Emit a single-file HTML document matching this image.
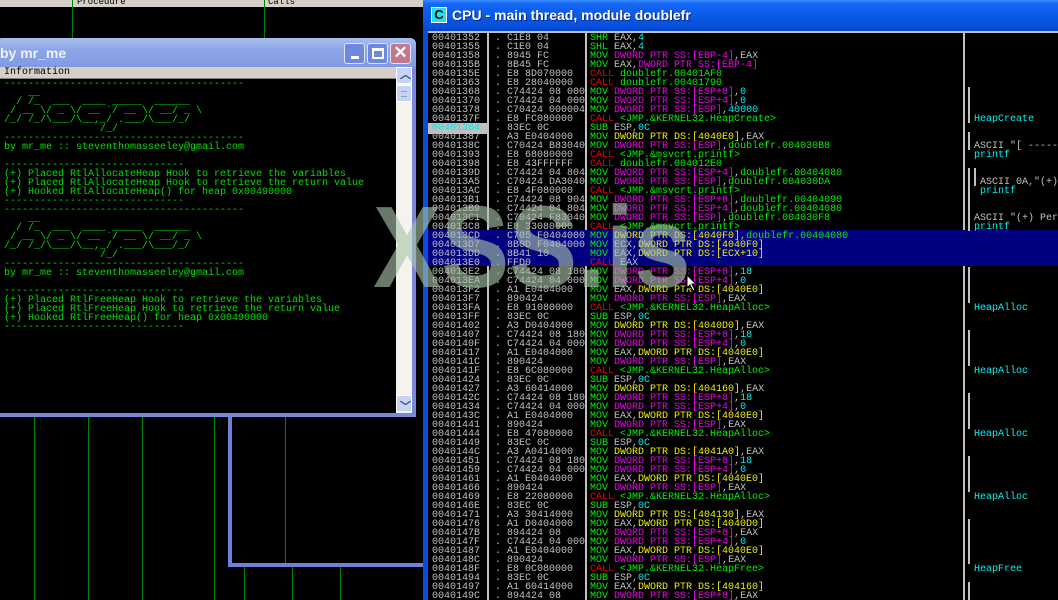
<!DOCTYPE html>
<html><head><meta charset="utf-8"><style>
*{margin:0;padding:0;box-sizing:border-box}
body{width:1058px;height:600px;background:#000;position:relative;overflow:hidden;font-family:"Liberation Mono",monospace;font-size:10px;line-height:9px;color:#c0c0c0}
.abs{position:absolute}
.gl{position:absolute;width:1px;background:#008000}
.lv{position:absolute;background:#7080d8}
#cpu{position:absolute;left:423px;top:0;width:635px;height:600px;background:#0a4ee0}
#ctitle{position:absolute;left:0;top:0;width:635px;height:31px;background:linear-gradient(#3a8cff 0,#1466f4 4px,#0a5ae8 50%,#0750dc 85%,#0646c8 100%)}
#ctitle .ic{position:absolute;left:8px;top:7px;width:16px;height:16px;background:#1ee0f0;border:1px solid #fff;color:#000;font:bold 13px "Liberation Sans",sans-serif;text-align:center;line-height:14px}
#ctitle .t{position:absolute;left:29px;top:7px;color:#fff;font:bold 14px "Liberation Sans",sans-serif;text-shadow:1px 1px 0 #0a2a80;white-space:nowrap}
#list{position:absolute;left:5px;top:31px;width:630px;height:569px;background:#000;border-top:2px solid #c0c0c0;overflow:hidden}
.row{height:9px;white-space:nowrap;position:relative;line-height:11px}
.row span{display:inline-block;vertical-align:top}
.row span span{display:inline}
.a{width:66px;padding-left:4px}
.h{width:91px;padding-left:1px;overflow:hidden;height:11px}
.n{padding-left:5px}
.g{color:#00f000}.m{color:#f000f0}.y{color:#f0f000}.c{color:#00f0f0}.r{color:#f00000}
.sep{position:absolute;top:0;width:2px;height:569px;background:#c0c0c0}
.br{position:absolute;width:2px;background:#c0c0c0}
.cm{position:absolute;white-space:nowrap;line-height:11px}
#lw{position:absolute;left:-4px;top:38px;width:420px;height:379px;background:#7a88dc;border-radius:6px 6px 0 0}
#lt{position:absolute;left:0;top:0;width:420px;height:29px;background:linear-gradient(#a9bdf0,#8ea6e8 40%,#8099e2);border-radius:6px 6px 0 0}
#lt .t{position:absolute;left:4px;top:7px;color:#eef2ff;font:bold 14px "Liberation Sans",sans-serif}
.btn{position:absolute;top:5px;width:21px;height:21px;border:1px solid #dde4fb;border-radius:3px;background:#6f88df}
#lc{position:absolute;left:4px;top:29px;width:412px;height:346px;background:#000}
#hd{position:absolute;left:0;top:0;width:396px;height:12px;background:#d4d0c8;color:#000;padding-left:4px;line-height:12px;border-bottom:1px solid #808080}
#sb{position:absolute;left:396px;top:0;width:16px;height:346px;background:#f4f3ee}
.sbb{position:absolute;left:0;width:16px;height:17px;background:#c6d3f7;border:1px solid #fff;border-radius:2px}
#log{position:absolute;left:4px;top:13px;color:#00e000;white-space:pre;font-size:10px;line-height:9px}
</style></head><body>

<div class="abs" style="left:0;top:0;width:423px;height:7px;background:#d4d0c8;overflow:hidden;color:#000;font-size:9px;line-height:6px">
<span class="abs" style="left:77px;top:-1px">Procedure</span><span class="abs" style="left:268px;top:-1px">Calls</span></div>
<div class="gl" style="left:72px;top:0;height:38px"></div>
<div class="gl" style="left:264px;top:0;height:38px"></div>

<div class="gl" style="left:34px;top:416px;height:184px"></div>
<div class="gl" style="left:88px;top:416px;height:184px"></div>
<div class="gl" style="left:142px;top:416px;height:184px"></div>
<div class="gl" style="left:214px;top:416px;height:184px"></div>
<div class="gl" style="left:285px;top:416px;height:148px"></div>
<div class="gl" style="left:244px;top:566px;height:34px"></div>
<div class="gl" style="left:292px;top:566px;height:34px"></div>
<div class="gl" style="left:340px;top:566px;height:34px"></div>
<div class="lv" style="left:228px;top:414px;width:4px;height:152px"></div>
<div class="lv" style="left:228px;top:563px;width:195px;height:4px"></div>

<div id="lw">
 <div id="lt"><span class="t">by mr_me</span>
  <div class="btn" style="left:348px"><div class="abs" style="left:6px;top:12px;width:8px;height:3px;background:#fff"></div></div>
  <div class="btn" style="left:371px"><div class="abs" style="left:4px;top:4px;width:12px;height:11px;border:2px solid #fff;border-top-width:3px"></div></div>
  <div class="btn" style="left:394px;background:#c07a8c"><div class="abs" style="left:0;top:-1px;width:19px;text-align:center;color:#fff;font:bold 17px 'Liberation Sans',sans-serif">✕</div></div>
 </div>
 <div id="lc">
  <div id="hd">Information</div>
  <div id="log">----------------------------------------
    __
  / /_  ___  ____ _____  ______
 / __ \/ _ \/ __ `/ __ \/ __/ _ \
/_/ /_/\___/\__,_/ .___/\___/_/
                /_/
----------------------------------------
by mr_me :: steventhomasseeley@gmail.com

------------------------------
(+) Placed RtlAllocateHeap Hook to retrieve the variables
(+) Placed RtlAllocateHeap Hook to retrieve the return value
(+) Hooked RtlAllocateHeap() for heap 0x00490000
------------------------------
----------------------------------------
    __
  / /_  ___  ____ _____  ______
 / __ \/ _ \/ __ `/ __ \/ __/ _ \
/_/ /_/\___/\__,_/ .___/\___/_/
                /_/
----------------------------------------
by mr_me :: steventhomasseeley@gmail.com

------------------------------
(+) Placed RtlFreeHeap Hook to retrieve the variables
(+) Placed RtlFreeHeap Hook to retrieve the return value
(+) Hooked RtlFreeHeap() for heap 0x00490000
------------------------------</div>
  <div id="sb">
   <div class="sbb" style="top:0"><div class="abs" style="left:3px;top:-2px;color:#36507a;font:bold 11px 'Liberation Sans',sans-serif">︿</div></div>
   <div class="sbb" style="top:18px"><div class="abs" style="left:4px;top:5px;width:6px;height:6px;border-top:1px solid #8aa;border-bottom:1px solid #8aa"></div></div>
   <div class="sbb" style="top:328px"><div class="abs" style="left:3px;top:2px;color:#36507a;font:bold 11px 'Liberation Sans',sans-serif">﹀</div></div>
  </div>
 </div>
</div>

<div id="cpu">
 <div id="ctitle"><div class="ic">C</div><div class="t">CPU - main thread, module doublefr</div></div>
 <div id="list">
  <div class="sep" style="left:59px"></div>
  <div class="sep" style="left:157px"></div>
  <div class="sep" style="left:535px"></div>
  <div class="abs" style="left:0;top:197px;width:630px;height:36px;background:#000080"></div>
  <div class="abs" style="left:0;top:0">
<div class="row"><span class="a">00401352</span><span class="h">. C1E8 04</span><span class="n"><span class="g">SHR</span> EAX,<span class="c">4</span></span></div>
<div class="row"><span class="a">00401355</span><span class="h">. C1E0 04</span><span class="n"><span class="g">SHL</span> EAX,<span class="c">4</span></span></div>
<div class="row"><span class="a">00401358</span><span class="h">. 8945 FC</span><span class="n"><span class="g">MOV</span> <span class="m">DWORD PTR SS:[EBP-4]</span>,EAX</span></div>
<div class="row"><span class="a">0040135B</span><span class="h">. 8B45 FC</span><span class="n"><span class="g">MOV</span> EAX,<span class="m">DWORD PTR SS:[EBP-4]</span></span></div>
<div class="row"><span class="a">0040135E</span><span class="h">. E8 8D070000</span><span class="n"><span class="r">CALL</span> <span class="g">doublefr.00401AF0</span></span></div>
<div class="row"><span class="a">00401363</span><span class="h">. E8 28040000</span><span class="n"><span class="r">CALL</span> <span class="g">doublefr.00401790</span></span></div>
<div class="row"><span class="a">00401368</span><span class="h">. C74424 08 0000</span><span class="n"><span class="g">MOV</span> <span class="m">DWORD PTR SS:[ESP+8]</span>,<span class="c">0</span></span></div>
<div class="row"><span class="a">00401370</span><span class="h">. C74424 04 0000</span><span class="n"><span class="g">MOV</span> <span class="m">DWORD PTR SS:[ESP+4]</span>,<span class="c">0</span></span></div>
<div class="row"><span class="a">00401378</span><span class="h">. C70424 0000040</span><span class="n"><span class="g">MOV</span> <span class="m">DWORD PTR SS:[ESP]</span>,<span class="c">40000</span></span></div>
<div class="row"><span class="a">0040137F</span><span class="h">. E8 FC080000</span><span class="n"><span class="r">CALL</span> <span class="g">&lt;JMP.&amp;KERNEL32.HeapCreate&gt;</span></span></div>
<div class="row"><span class="a" style="background:#c0c0c0;color:#00e8f0;width:59px">00401384</span><span class="h" style="margin-left:7px">. 83EC 0C</span><span class="n"><span class="g">SUB</span> ESP,<span class="c">0C</span></span></div>
<div class="row"><span class="a">00401387</span><span class="h">. A3 E0404000</span><span class="n"><span class="g">MOV</span> <span class="y">DWORD PTR DS:[4040E0]</span>,EAX</span></div>
<div class="row"><span class="a">0040138C</span><span class="h">. C70424 B830400</span><span class="n"><span class="g">MOV</span> <span class="m">DWORD PTR SS:[ESP]</span>,<span class="g">doublefr.004030B8</span></span></div>
<div class="row"><span class="a">00401393</span><span class="h">. E8 68080000</span><span class="n"><span class="r">CALL</span> <span class="g">&lt;JMP.&amp;msvcrt.printf&gt;</span></span></div>
<div class="row"><span class="a">00401398</span><span class="h">. E8 43FFFFFF</span><span class="n"><span class="r">CALL</span> <span class="g">doublefr.004012E0</span></span></div>
<div class="row"><span class="a">0040139D</span><span class="h">. C74424 04 8040</span><span class="n"><span class="g">MOV</span> <span class="m">DWORD PTR SS:[ESP+4]</span>,<span class="g">doublefr.00404080</span></span></div>
<div class="row"><span class="a">004013A5</span><span class="h">. C70424 DA30400</span><span class="n"><span class="g">MOV</span> <span class="m">DWORD PTR SS:[ESP]</span>,<span class="g">doublefr.004030DA</span></span></div>
<div class="row"><span class="a">004013AC</span><span class="h">. E8 4F080000</span><span class="n"><span class="r">CALL</span> <span class="g">&lt;JMP.&amp;msvcrt.printf&gt;</span></span></div>
<div class="row"><span class="a">004013B1</span><span class="h">. C74424 08 9040</span><span class="n"><span class="g">MOV</span> <span class="m">DWORD PTR SS:[ESP+8]</span>,<span class="g">doublefr.00404090</span></span></div>
<div class="row"><span class="a">004013B9</span><span class="h">. C74424 04 8040</span><span class="n"><span class="g">MOV</span> <span class="m">DWORD PTR SS:[ESP+4]</span>,<span class="g">doublefr.00404080</span></span></div>
<div class="row"><span class="a">004013C1</span><span class="h">. C70424 F830400</span><span class="n"><span class="g">MOV</span> <span class="m">DWORD PTR SS:[ESP]</span>,<span class="g">doublefr.004030F8</span></span></div>
<div class="row"><span class="a">004013C8</span><span class="h">. E8 33080000</span><span class="n"><span class="r">CALL</span> <span class="g">&lt;JMP.&amp;msvcrt.printf&gt;</span></span></div>
<div class="row"><span class="a">004013CD</span><span class="h">. C705 F0404000</span><span class="n"><span class="g">MOV</span> <span class="y">DWORD PTR DS:[4040F0]</span>,<span class="g">doublefr.00404080</span></span></div>
<div class="row"><span class="a">004013D7</span><span class="h">. 8B0D F0404000</span><span class="n"><span class="g">MOV</span> ECX,<span class="y">DWORD PTR DS:[4040F0]</span></span></div>
<div class="row"><span class="a">004013DD</span><span class="h">. 8B41 10</span><span class="n"><span class="g">MOV</span> EAX,<span class="y">DWORD PTR DS:[ECX+10]</span></span></div>
<div class="row"><span class="a">004013E0</span><span class="h">. FFD0</span><span class="n"><span class="r">CALL</span> EAX</span></div>
<div class="row"><span class="a">004013E2</span><span class="h">. C74424 08 1800</span><span class="n"><span class="g">MOV</span> <span class="m">DWORD PTR SS:[ESP+8]</span>,<span class="c">18</span></span></div>
<div class="row"><span class="a">004013EA</span><span class="h">. C74424 04 0000</span><span class="n"><span class="g">MOV</span> <span class="m">DWORD PTR SS:[ESP+4]</span>,<span class="c">0</span></span></div>
<div class="row"><span class="a">004013F2</span><span class="h">. A1 E0404000</span><span class="n"><span class="g">MOV</span> EAX,<span class="y">DWORD PTR DS:[4040E0]</span></span></div>
<div class="row"><span class="a">004013F7</span><span class="h">. 890424</span><span class="n"><span class="g">MOV</span> <span class="m">DWORD PTR SS:[ESP]</span>,EAX</span></div>
<div class="row"><span class="a">004013FA</span><span class="h">. E8 91080000</span><span class="n"><span class="r">CALL</span> <span class="g">&lt;JMP.&amp;KERNEL32.HeapAlloc&gt;</span></span></div>
<div class="row"><span class="a">004013FF</span><span class="h">. 83EC 0C</span><span class="n"><span class="g">SUB</span> ESP,<span class="c">0C</span></span></div>
<div class="row"><span class="a">00401402</span><span class="h">. A3 D0404000</span><span class="n"><span class="g">MOV</span> <span class="y">DWORD PTR DS:[4040D0]</span>,EAX</span></div>
<div class="row"><span class="a">00401407</span><span class="h">. C74424 08 1800</span><span class="n"><span class="g">MOV</span> <span class="m">DWORD PTR SS:[ESP+8]</span>,<span class="c">18</span></span></div>
<div class="row"><span class="a">0040140F</span><span class="h">. C74424 04 0000</span><span class="n"><span class="g">MOV</span> <span class="m">DWORD PTR SS:[ESP+4]</span>,<span class="c">0</span></span></div>
<div class="row"><span class="a">00401417</span><span class="h">. A1 E0404000</span><span class="n"><span class="g">MOV</span> EAX,<span class="y">DWORD PTR DS:[4040E0]</span></span></div>
<div class="row"><span class="a">0040141C</span><span class="h">. 890424</span><span class="n"><span class="g">MOV</span> <span class="m">DWORD PTR SS:[ESP]</span>,EAX</span></div>
<div class="row"><span class="a">0040141F</span><span class="h">. E8 6C080000</span><span class="n"><span class="r">CALL</span> <span class="g">&lt;JMP.&amp;KERNEL32.HeapAlloc&gt;</span></span></div>
<div class="row"><span class="a">00401424</span><span class="h">. 83EC 0C</span><span class="n"><span class="g">SUB</span> ESP,<span class="c">0C</span></span></div>
<div class="row"><span class="a">00401427</span><span class="h">. A3 60414000</span><span class="n"><span class="g">MOV</span> <span class="y">DWORD PTR DS:[404160]</span>,EAX</span></div>
<div class="row"><span class="a">0040142C</span><span class="h">. C74424 08 1800</span><span class="n"><span class="g">MOV</span> <span class="m">DWORD PTR SS:[ESP+8]</span>,<span class="c">18</span></span></div>
<div class="row"><span class="a">00401434</span><span class="h">. C74424 04 0000</span><span class="n"><span class="g">MOV</span> <span class="m">DWORD PTR SS:[ESP+4]</span>,<span class="c">0</span></span></div>
<div class="row"><span class="a">0040143C</span><span class="h">. A1 E0404000</span><span class="n"><span class="g">MOV</span> EAX,<span class="y">DWORD PTR DS:[4040E0]</span></span></div>
<div class="row"><span class="a">00401441</span><span class="h">. 890424</span><span class="n"><span class="g">MOV</span> <span class="m">DWORD PTR SS:[ESP]</span>,EAX</span></div>
<div class="row"><span class="a">00401444</span><span class="h">. E8 47080000</span><span class="n"><span class="r">CALL</span> <span class="g">&lt;JMP.&amp;KERNEL32.HeapAlloc&gt;</span></span></div>
<div class="row"><span class="a">00401449</span><span class="h">. 83EC 0C</span><span class="n"><span class="g">SUB</span> ESP,<span class="c">0C</span></span></div>
<div class="row"><span class="a">0040144C</span><span class="h">. A3 A0414000</span><span class="n"><span class="g">MOV</span> <span class="y">DWORD PTR DS:[4041A0]</span>,EAX</span></div>
<div class="row"><span class="a">00401451</span><span class="h">. C74424 08 1800</span><span class="n"><span class="g">MOV</span> <span class="m">DWORD PTR SS:[ESP+8]</span>,<span class="c">18</span></span></div>
<div class="row"><span class="a">00401459</span><span class="h">. C74424 04 0000</span><span class="n"><span class="g">MOV</span> <span class="m">DWORD PTR SS:[ESP+4]</span>,<span class="c">0</span></span></div>
<div class="row"><span class="a">00401461</span><span class="h">. A1 E0404000</span><span class="n"><span class="g">MOV</span> EAX,<span class="y">DWORD PTR DS:[4040E0]</span></span></div>
<div class="row"><span class="a">00401466</span><span class="h">. 890424</span><span class="n"><span class="g">MOV</span> <span class="m">DWORD PTR SS:[ESP]</span>,EAX</span></div>
<div class="row"><span class="a">00401469</span><span class="h">. E8 22080000</span><span class="n"><span class="r">CALL</span> <span class="g">&lt;JMP.&amp;KERNEL32.HeapAlloc&gt;</span></span></div>
<div class="row"><span class="a">0040146E</span><span class="h">. 83EC 0C</span><span class="n"><span class="g">SUB</span> ESP,<span class="c">0C</span></span></div>
<div class="row"><span class="a">00401471</span><span class="h">. A3 30414000</span><span class="n"><span class="g">MOV</span> <span class="y">DWORD PTR DS:[404130]</span>,EAX</span></div>
<div class="row"><span class="a">00401476</span><span class="h">. A1 D0404000</span><span class="n"><span class="g">MOV</span> EAX,<span class="y">DWORD PTR DS:[4040D0]</span></span></div>
<div class="row"><span class="a">0040147B</span><span class="h">. 894424 08</span><span class="n"><span class="g">MOV</span> <span class="m">DWORD PTR SS:[ESP+8]</span>,EAX</span></div>
<div class="row"><span class="a">0040147F</span><span class="h">. C74424 04 0000</span><span class="n"><span class="g">MOV</span> <span class="m">DWORD PTR SS:[ESP+4]</span>,<span class="c">0</span></span></div>
<div class="row"><span class="a">00401487</span><span class="h">. A1 E0404000</span><span class="n"><span class="g">MOV</span> EAX,<span class="y">DWORD PTR DS:[4040E0]</span></span></div>
<div class="row"><span class="a">0040148C</span><span class="h">. 890424</span><span class="n"><span class="g">MOV</span> <span class="m">DWORD PTR SS:[ESP]</span>,EAX</span></div>
<div class="row"><span class="a">0040148F</span><span class="h">. E8 0C080000</span><span class="n"><span class="r">CALL</span> <span class="g">&lt;JMP.&amp;KERNEL32.HeapFree&gt;</span></span></div>
<div class="row"><span class="a">00401494</span><span class="h">. 83EC 0C</span><span class="n"><span class="g">SUB</span> ESP,<span class="c">0C</span></span></div>
<div class="row"><span class="a">00401497</span><span class="h">. A1 60414000</span><span class="n"><span class="g">MOV</span> EAX,<span class="y">DWORD PTR DS:[404160]</span></span></div>
<div class="row"><span class="a">0040149C</span><span class="h">. 894424 08</span><span class="n"><span class="g">MOV</span> <span class="m">DWORD PTR SS:[ESP+8]</span>,EAX</span></div>
  </div>
  <div class="br" style="left:540px;top:54px;height:36px"></div><div class="cm c" style="left:546px;top:81px">HeapCreate</div>
  <div class="br" style="left:540px;top:99px;height:18px"></div><div class="cm" style="left:546px;top:108px">ASCII "[ ------</div><div class="cm c" style="left:546px;top:117px">printf</div>
  <div class="br" style="left:540px;top:135px;height:63px"></div>
  <div class="br" style="left:546px;top:135px;height:18px"></div><div class="cm" style="left:552px;top:144px">ASCII 0A,"(+)</div><div class="cm c" style="left:552px;top:153px">printf</div>
  <div class="cm" style="left:546px;top:180px">ASCII "(+) Per</div><div class="cm c" style="left:546px;top:189px">printf</div>
  <div class="br" style="left:540px;top:234px;height:36px"></div><div class="cm c" style="left:546px;top:270px">HeapAlloc</div>
  <div class="br" style="left:540px;top:297px;height:36px"></div><div class="cm c" style="left:546px;top:333px">HeapAlloc</div>
  <div class="br" style="left:540px;top:360px;height:36px"></div><div class="cm c" style="left:546px;top:396px">HeapAlloc</div>
  <div class="br" style="left:540px;top:423px;height:36px"></div><div class="cm c" style="left:546px;top:459px">HeapAlloc</div>
  <div class="br" style="left:540px;top:486px;height:45px"></div><div class="cm c" style="left:546px;top:531px">HeapFree</div>
  <div class="br" style="left:540px;top:549px;height:20px"></div>
 </div>
</div>

<div class="abs" style="left:373px;top:182px;font:bold 116px 'Liberation Sans',sans-serif;line-height:130px;color:rgba(170,195,170,0.62);transform:scaleX(0.88);transform-origin:left top;white-space:nowrap">XSS.is</div>
<svg class="abs" style="left:686px;top:274px" width="12" height="18"><path d="M1 1 L1 14 L4 11 L7 17 L9 16 L6 10 L10 10 Z" fill="#fff" stroke="#000" stroke-width="1"/></svg>
</body></html>
